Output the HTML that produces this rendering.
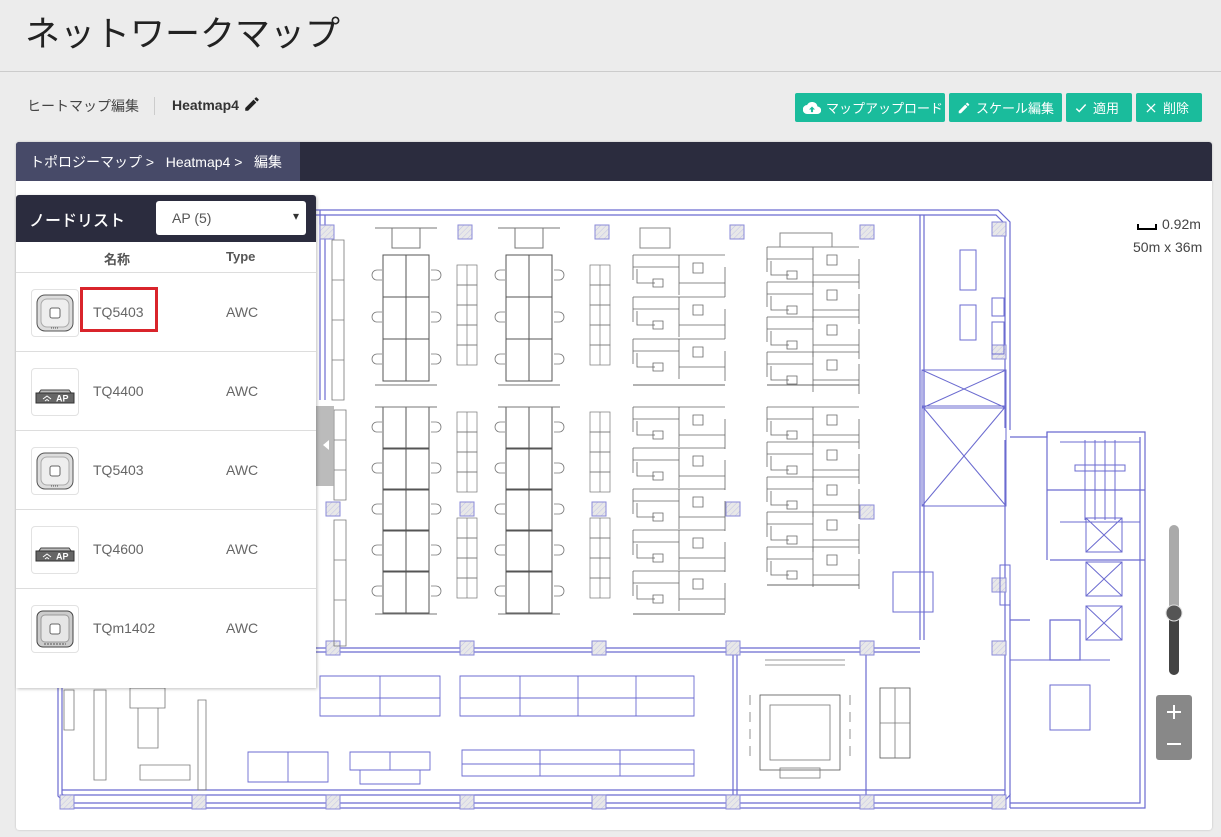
<!DOCTYPE html>
<html lang="ja"><head><meta charset="utf-8">
<style>
*{box-sizing:border-box;margin:0;padding:0}
body{width:1221px;height:837px;overflow:hidden;background:#ececec;font-family:"Liberation Sans","Noto Sans CJK JP",sans-serif;color:#333;position:relative}
.title{position:absolute;left:25px;top:6px;font-size:35px;color:#222;font-weight:400;letter-spacing:0}
.hr{position:absolute;left:0;top:71px;width:1221px;height:1px;background:#ccc}
.sub{position:absolute;left:27px;top:96px;font-size:14px;color:#444}
.sep{position:absolute;left:154px;top:97px;width:1px;height:18px;background:#ccc}
.hm{position:absolute;left:172px;top:95px;font-size:14px;font-weight:bold;color:#333}
.btn{position:absolute;top:93px;height:29px;background:#1abc9c;color:#fff;font-size:13px;border-radius:2px;display:flex;align-items:center;padding-left:8px;gap:5px}
.panel{position:absolute;left:16px;top:142px;width:1196px;height:688px;background:#fff;box-shadow:0 0 2px rgba(0,0,0,.2);border-radius:3px;overflow:hidden}
.bar{position:absolute;left:0;top:0;width:1196px;height:39px;background:#2b2c3e}
.crumb{position:absolute;left:0;top:0;width:284px;height:39px;background:#474a68;color:#fff;font-size:14px;padding:10px 0 0 14px}
.nl{position:absolute;left:16px;top:195px;width:300px;height:493px;background:#fff;box-shadow:1px 1px 3px rgba(0,0,0,.25);border-radius:3px 3px 0 0}
.nlh{height:47px;background:#2b2c3e;border-radius:3px 3px 0 0;position:relative}
.nlh .t{position:absolute;left:13px;top:12px;color:#fff;font-size:16px;font-weight:500}
.sel{position:absolute;left:140px;top:6px;width:150px;height:34px;background:#fff;border-radius:3px;font-size:14px;color:#555;padding:9px 0 0 16px}
.sel:after{content:"▾";position:absolute;right:7px;top:8px;font-size:12px;color:#333}
.ch{height:31px;border-bottom:1px solid #ddd;position:relative;font-size:13px;font-weight:bold;color:#555}
.row{height:79px;border-bottom:1px solid #ddd;position:relative;font-size:14px;color:#666}
.ic{position:absolute;left:15px;top:16px;width:48px;height:48px;border:1px solid #e2e2e2;border-radius:4px;background:#fff}
.nm{position:absolute;left:77px;top:31px}
.ty{position:absolute;left:210px;top:31px}
</style></head><body>
<div class="title">ネットワークマップ</div>
<div class="hr"></div>
<div class="sub">ヒートマップ編集</div><div class="sep"></div>
<div class="hm">Heatmap4 <svg width="18" height="18" viewBox="0 0 24 24" style="vertical-align:-3px"><path d="M3 17.25V21h3.75L17.8 9.94l-3.75-3.75L3 17.25zM20.7 7.04a1 1 0 000-1.41l-2.34-2.34a1 1 0 00-1.41 0l-1.83 1.83 3.75 3.75 1.83-1.83z" fill="#222"/></svg></div>

<div class="btn" style="left:795px;width:150px"><svg width="18" height="14" viewBox="0 0 24 18"><path d="M19.4 7A7.5 7.5 0 005.4 5 6 6 0 006 17h13a5 5 0 00.4-10z" fill="#fff"/><path d="M12 7l-4 4h2.6v3.5h2.8V11H16z" fill="#1abc9c"/></svg>マップアップロード</div>
<div class="btn" style="left:949px;width:113px"><svg width="14" height="14" viewBox="0 0 24 24"><path d="M3 17.25V21h3.75L17.8 9.94l-3.75-3.75L3 17.25zM20.7 7.04a1 1 0 000-1.41l-2.34-2.34a1 1 0 00-1.41 0l-1.83 1.83 3.75 3.75 1.83-1.83z" fill="#fff"/></svg>スケール編集</div>
<div class="btn" style="left:1066px;width:66px"><svg width="14" height="14" viewBox="0 0 24 24"><path d="M4 13l5 5L20 6" stroke="#fff" stroke-width="2.5" fill="none"/></svg>適用</div>
<div class="btn" style="left:1136px;width:66px"><svg width="14" height="14" viewBox="0 0 24 24"><path d="M5 5l14 14M19 5L5 19" stroke="#fff" stroke-width="2.2"/></svg>削除</div>

<div class="panel"><div class="bar"></div><div class="crumb">トポロジーマップ &gt;&nbsp;&nbsp; Heatmap4 &gt;&nbsp;&nbsp; 編集</div></div>

<svg style="position:absolute;left:0;top:0" width="1221" height="837" viewBox="0 0 1221 837">
<defs>
<pattern id="h" width="4" height="4" patternUnits="userSpaceOnUse" patternTransform="rotate(45)"><rect width="4" height="4" fill="#e8e8e8"/><line x1="0" y1="0" x2="0" y2="4" stroke="#b8b8e8" stroke-width="0.8"/></pattern>
<g id="col"><rect x="0" y="0" width="14" height="14" fill="url(#h)" stroke="#8a8ad8"/></g>
<g id="chair"><path d="M0 0h5a4 4 0 010 10h-5" fill="none" stroke="#777" stroke-width="0.8"/></g>
<g id="d2" fill="none" stroke="#555" stroke-width="1"><rect x="0" y="0" width="46" height="42"/><line x1="23" y1="0" x2="23" y2="42"/></g>
<g id="nar" fill="none" stroke="#777" stroke-width="0.7"><rect x="0" y="0" width="20" height="20"/><line x1="10" y1="0" x2="10" y2="20"/></g>
<g id="cub" fill="none" stroke="#666" stroke-width="0.8"><path d="M0 0h92M0 0v25M0 12h46M46 0v40M46 28h46M92 12v30M4 14v14h18"/><path d="M20 24h10v8h-10z"/><path d="M60 8h10v10h-10z"/></g>
</defs>
<g fill="none" stroke="#6b6bd0" stroke-width="1.2">
<path d="M58 210H998L1010 222V430"/>
<path d="M62 215H996L1005 224V428"/>
<path d="M1010 437H1047V432H1145V808H1010"/>
<path d="M1010 808V795L998 808H70L58 796V210"/>
<path d="M62 214V794L72 803H996L1005 794V440"/>
<path d="M1140 437V803H1010"/>
<path d="M320 210V400M325 215V400"/>
<path d="M920 215V640M924 215V640"/>
<path d="M58 648H920M58 652H920"/>
<path d="M62 790H1005M62 795H1005"/>
<path d="M733 652V795M737 652V795M866 652V795"/>
<path d="M1010 600V795"/>
<path d="M1047 432V490H1145M1047 490V560"/>
<path d="M1050 560H1145"/>
<path d="M1010 620H1030M1050 620H1080V660H1050Z"/>
</g>
<g>
<use href="#col" x="320" y="225"/><use href="#col" x="458" y="225"/><use href="#col" x="595" y="225"/><use href="#col" x="730" y="225"/><use href="#col" x="860" y="225"/><use href="#col" x="992" y="222"/>
<use href="#col" x="326" y="502"/><use href="#col" x="460" y="502"/><use href="#col" x="592" y="502"/><use href="#col" x="726" y="502"/><use href="#col" x="860" y="505"/><use href="#col" x="992" y="345"/>
<use href="#col" x="326" y="641"/><use href="#col" x="460" y="641"/><use href="#col" x="592" y="641"/><use href="#col" x="726" y="641"/><use href="#col" x="860" y="641"/><use href="#col" x="992" y="578"/><use href="#col" x="992" y="641"/>
<use href="#col" x="192" y="795"/><use href="#col" x="326" y="795"/><use href="#col" x="460" y="795"/><use href="#col" x="592" y="795"/><use href="#col" x="726" y="795"/><use href="#col" x="860" y="795"/><use href="#col" x="60" y="795"/><use href="#col" x="992" y="795"/>
</g>
<g>
<use href="#d2" x="383" y="255"/><use href="#d2" x="383" y="297"/><use href="#d2" x="383" y="339"/>
<use href="#d2" x="506" y="255"/><use href="#d2" x="506" y="297"/><use href="#d2" x="506" y="339"/>
<use href="#d2" x="383" y="407"/><use href="#d2" x="383" y="448"/><use href="#d2" x="383" y="489"/><use href="#d2" x="383" y="530"/><use href="#d2" x="383" y="571"/>
<use href="#d2" x="506" y="407"/><use href="#d2" x="506" y="448"/><use href="#d2" x="506" y="489"/><use href="#d2" x="506" y="530"/><use href="#d2" x="506" y="571"/>
<path d="M375 228h62M375 385h62M498 228h62M498 385h62M375 407h62M375 614h62M498 407h62M498 614h62" stroke="#777"/>
<rect x="392" y="228" width="28" height="20" fill="none" stroke="#777"/><rect x="515" y="228" width="28" height="20" fill="none" stroke="#777"/>
</g>
<g>
<use href="#nar" x="457" y="265"/><use href="#nar" x="457" y="285"/><use href="#nar" x="457" y="305"/><use href="#nar" x="457" y="325"/><use href="#nar" x="457" y="345"/>
<use href="#nar" x="590" y="265"/><use href="#nar" x="590" y="285"/><use href="#nar" x="590" y="305"/><use href="#nar" x="590" y="325"/><use href="#nar" x="590" y="345"/>
<use href="#nar" x="457" y="412"/><use href="#nar" x="457" y="432"/><use href="#nar" x="457" y="452"/><use href="#nar" x="457" y="472"/><use href="#nar" x="457" y="518"/><use href="#nar" x="457" y="538"/><use href="#nar" x="457" y="558"/><use href="#nar" x="457" y="578"/>
<use href="#nar" x="590" y="412"/><use href="#nar" x="590" y="432"/><use href="#nar" x="590" y="452"/><use href="#nar" x="590" y="472"/><use href="#nar" x="590" y="518"/><use href="#nar" x="590" y="538"/><use href="#nar" x="590" y="558"/><use href="#nar" x="590" y="578"/>
</g>
<g>
<use href="#chair" x="431" y="270"/><use href="#chair" x="431" y="312"/><use href="#chair" x="431" y="354"/><use href="#chair" x="554" y="270"/><use href="#chair" x="554" y="312"/><use href="#chair" x="554" y="354"/>
<use href="#chair" x="431" y="422"/><use href="#chair" x="431" y="463"/><use href="#chair" x="431" y="504"/><use href="#chair" x="431" y="545"/><use href="#chair" x="431" y="586"/>
<use href="#chair" x="554" y="422"/><use href="#chair" x="554" y="463"/><use href="#chair" x="554" y="504"/><use href="#chair" x="554" y="545"/><use href="#chair" x="554" y="586"/>
<g transform="translate(760,0) scale(-1,1)"><use href="#chair" x="378" y="270"/><use href="#chair" x="378" y="312"/><use href="#chair" x="378" y="354"/><use href="#chair" x="378" y="422"/><use href="#chair" x="378" y="463"/><use href="#chair" x="378" y="504"/><use href="#chair" x="378" y="545"/><use href="#chair" x="378" y="586"/></g>
<g transform="translate(1006,0) scale(-1,1)"><use href="#chair" x="501" y="270"/><use href="#chair" x="501" y="312"/><use href="#chair" x="501" y="354"/><use href="#chair" x="501" y="422"/><use href="#chair" x="501" y="463"/><use href="#chair" x="501" y="504"/><use href="#chair" x="501" y="545"/><use href="#chair" x="501" y="586"/></g>
</g>
<g>
<use href="#cub" x="633" y="255"/><use href="#cub" x="633" y="297"/><use href="#cub" x="633" y="339"/>
<use href="#cub" x="767" y="247"/><use href="#cub" x="767" y="282"/><use href="#cub" x="767" y="317"/><use href="#cub" x="767" y="352"/>
<use href="#cub" x="633" y="407"/><use href="#cub" x="633" y="448"/><use href="#cub" x="633" y="489"/><use href="#cub" x="633" y="530"/><use href="#cub" x="633" y="571"/>
<use href="#cub" x="767" y="407"/><use href="#cub" x="767" y="442"/><use href="#cub" x="767" y="477"/><use href="#cub" x="767" y="512"/><use href="#cub" x="767" y="547"/>
<path d="M633 385h92M633 614h92M767 385h92M767 585h92" stroke="#666"/>
<rect x="640" y="228" width="30" height="20" fill="none" stroke="#888"/><rect x="780" y="233" width="52" height="14" fill="none" stroke="#888"/>
</g>
<g fill="none" stroke="#777" stroke-width="0.8">
<path d="M332 240h12v160h-12zM332 280h12M332 320h12M332 360h12"/>
<path d="M334 410h12v90h-12zM334 440h12M334 470h12"/>
<path d="M334 520h12v126h-12zM334 560h12M334 600h12"/>
</g>
<g fill="none" stroke="#6b6bd0" stroke-width="1">
<rect x="922" y="370" width="84" height="38"/><path d="M922 370L1006 408M1006 370L922 408"/>
<rect x="922" y="406" width="84" height="100"/><path d="M922 406L1006 506M1006 406L922 506"/>
<rect x="960" y="250" width="16" height="40"/><rect x="960" y="305" width="16" height="35"/><rect x="992" y="298" width="12" height="18"/><rect x="992" y="322" width="12" height="32"/>
<path d="M1060 442h80v80h-80M1085 440v80M1095 440v80M1105 440v80M1115 440v80M1075 465h50v6h-50z"/>
<rect x="1086" y="518" width="36" height="34"/><path d="M1086 518l36 34M1122 518l-36 34"/>
<rect x="1086" y="562" width="36" height="34"/><path d="M1086 562l36 34M1122 562l-36 34"/>
<rect x="1086" y="606" width="36" height="34"/><path d="M1086 606l36 34M1122 606l-36 34"/>
<rect x="893" y="572" width="40" height="40"/><rect x="1050" y="685" width="40" height="45"/>
<path d="M1010 660h100"/>
<rect x="1000" y="565" width="10" height="40"/>
</g>
<g fill="none" stroke="#777" stroke-width="0.8">
<rect x="760" y="695" width="80" height="75" stroke="#555"/><rect x="770" y="705" width="60" height="55"/>
<path d="M750 695v10M750 712v10M750 729v10M750 746v10M850 695v10M850 712v10M850 729v10M850 746v10"/>
<rect x="780" y="768" width="40" height="10"/>
<rect x="880" y="688" width="30" height="70" stroke="#555"/><path d="M895 688v70M880 723h30"/>
<path d="M765 660h80M765 665h80"/>
</g>
<g fill="none" stroke="#6b6bd0" stroke-width="0.9">
<path d="M320 676h120v22H320zM320 698h120v18H320zM380 676v40"/>
<path d="M460 676h234v22H460zM460 698h234v18H460zM520 676v40M578 676v40M636 676v40"/>
<path d="M462 750h232v14H462zM462 764h232v12H462zM540 750v26M620 750v26"/>
<path d="M350 752h80v18h-80zM390 752v18M360 770h60v14h-60z"/>
<path d="M248 752h80v30h-80zM288 752v30"/>
</g>
<g fill="none" stroke="#777" stroke-width="0.8">
<path d="M64 690h10v40H64zM94 690h12v90H94zM130 688h35v20h-35zM138 708h20v40h-20zM198 700h8v90h-8zM140 765h50v15h-50z"/>
</g>
<path d="M1138 224v5h18v-5" stroke="#000" stroke-width="2" fill="none"/>
<text x="1162" y="229" font-family="Liberation Sans" font-size="14" fill="#444">0.92m</text>
<text x="1133" y="252" font-family="Liberation Sans" font-size="14" fill="#444">50m x 36m</text>
<rect x="1169" y="525" width="10" height="150" rx="5" fill="#aaa"/>
<rect x="1169" y="613" width="10" height="62" rx="5" fill="#444"/>
<circle cx="1174" cy="613" r="8" fill="#555" stroke="#ddd"/>
<rect x="1156" y="695" width="36" height="65" rx="3" fill="#888"/>
<path d="M1167 712h14M1174 705v14M1167 744h14" stroke="#fff" stroke-width="2"/>
<rect x="316" y="406" width="18" height="80" fill="#aaa" opacity=".8"/>
<path d="M329 440l-6 5 6 5z" fill="#fff"/>
</svg>

<div class="nl">
<div class="nlh"><div class="t">ノードリスト</div><div class="sel">AP (5)</div></div>
<div class="ch"><span style="position:absolute;left:88px;top:7px">名称</span><span style="position:absolute;left:210px;top:7px">Type</span></div>
<div class="row"><div class="ic"><svg width="46" height="46" viewBox="0 0 46 46"><rect x="5" y="5" width="36" height="36" rx="8" fill="#ddd" stroke="#555"/><rect x="9" y="9" width="28" height="28" rx="6" fill="#eee" stroke="#aaa"/><rect x="18" y="18" width="10" height="10" rx="2" fill="#fff" stroke="#666"/><path d="M19 38h8" stroke="#555" stroke-dasharray="1 1"/></svg></div><div class="nm">TQ5403</div><div class="ty">AWC</div>
<div style="position:absolute;left:64px;top:14px;width:78px;height:45px;border:3px solid #d9242b"></div></div>
<div class="row"><div class="ic"><svg width="46" height="46" viewBox="0 0 46 46"><path d="M6 25l3-4h28l3 4z" fill="#bbb" stroke="#444"/><rect x="4" y="24" width="38" height="10" fill="#666" stroke="#333"/><text x="24" y="32.5" font-family="Liberation Sans" font-size="9" font-weight="bold" fill="#fff">AP</text><path d="M11 30l4-3 4 3M13 32l2-1.5 2 1.5" stroke="#fff" fill="none"/></svg></div><div class="nm">TQ4400</div><div class="ty">AWC</div></div>
<div class="row"><div class="ic"><svg width="46" height="46" viewBox="0 0 46 46"><rect x="5" y="5" width="36" height="36" rx="8" fill="#ddd" stroke="#555"/><rect x="9" y="9" width="28" height="28" rx="6" fill="#eee" stroke="#aaa"/><rect x="18" y="18" width="10" height="10" rx="2" fill="#fff" stroke="#666"/><path d="M19 38h8" stroke="#555" stroke-dasharray="1 1"/></svg></div><div class="nm">TQ5403</div><div class="ty">AWC</div></div>
<div class="row"><div class="ic"><svg width="46" height="46" viewBox="0 0 46 46"><path d="M6 25l3-4h28l3 4z" fill="#bbb" stroke="#444"/><rect x="4" y="24" width="38" height="10" fill="#666" stroke="#333"/><text x="24" y="32.5" font-family="Liberation Sans" font-size="9" font-weight="bold" fill="#fff">AP</text><path d="M11 30l4-3 4 3M13 32l2-1.5 2 1.5" stroke="#fff" fill="none"/></svg></div><div class="nm">TQ4600</div><div class="ty">AWC</div></div>
<div class="row" style="border-bottom:none"><div class="ic"><svg width="46" height="46" viewBox="0 0 46 46"><rect x="5" y="5" width="36" height="36" rx="6" fill="#ccc" stroke="#444"/><rect x="9" y="9" width="28" height="27" rx="4" fill="#e6e6e6" stroke="#999"/><rect x="18" y="18" width="10" height="10" rx="2" fill="#fff" stroke="#666"/><path d="M12 38h22" stroke="#555" stroke-dasharray="2 1"/></svg></div><div class="nm">TQm1402</div><div class="ty">AWC</div></div>
</div>
</body></html>
